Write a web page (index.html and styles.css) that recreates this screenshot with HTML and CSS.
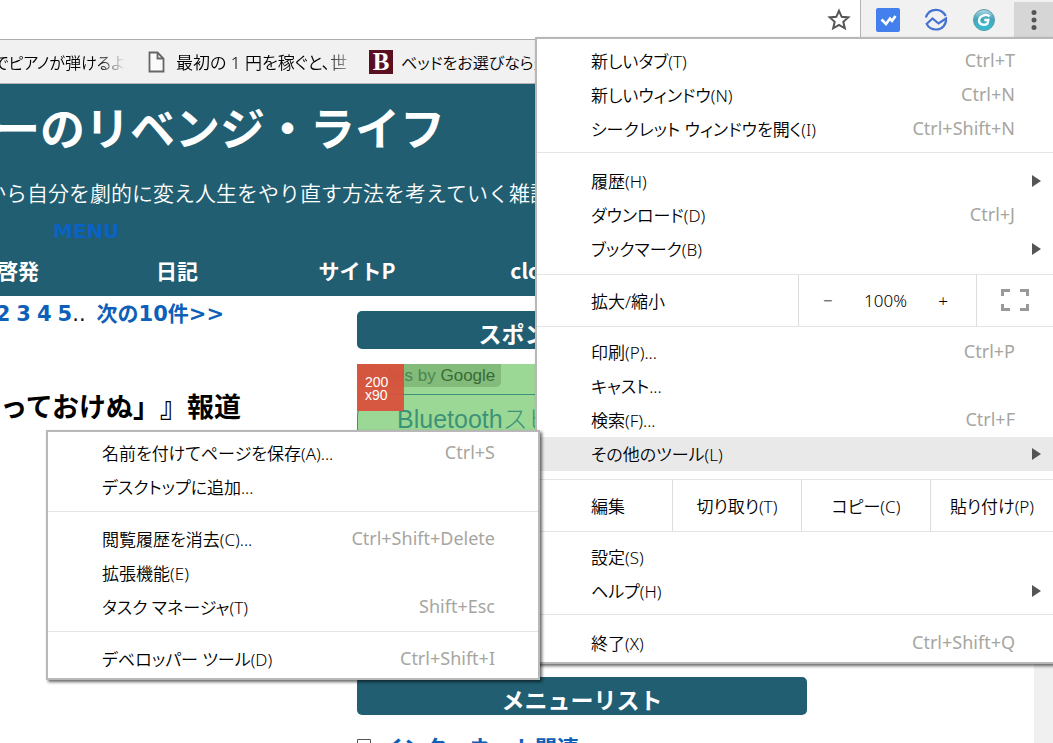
FILE: index.html
```
<!DOCTYPE html>
<html lang="ja">
<head>
<meta charset="utf-8">
<title>リベンジ・ライフ</title>
<link rel="stylesheet" href="styles.css">
</head>
<body>
<div class="browser">
  <header class="toolbar">
    <div class="omnibox">
      <button class="icon-button star" aria-label="ブックマークに追加">
        <svg width="24" height="24" viewBox="0 0 24 24"><path d="M12 2.800l2.700 6 6.600.6-5 4.400 1.500 6.500-5.800-3.400-5.800 3.400 1.500-6.500-5-4.400 6.600-.6z" fill="none" stroke="#555" stroke-width="2"/></svg>
      </button>
    </div>
    <div class="extensions">
      <button class="icon-button" aria-label="チェック">
        <svg width="24" height="24" viewBox="0 0 24 24"><rect width="24" height="24" rx="2" fill="#4380ee"/><path d="M5.500 11.500l4.500 4.500 4-5.500 2 2.300L19.500 8" fill="none" stroke="#fff" stroke-width="2.600"/></svg>
      </button>
      <button class="icon-button" aria-label="グラフ">
        <svg width="24" height="24" viewBox="0 0 24 24" fill="none" stroke="#4672d2" stroke-width="2.200"><path d="M1.800 9.500C3.500 4.500 7 1.800 12 1.800c4.500 0 8 2.700 9.700 6.200M2 16.500L8.500 10.500l6 5L22 10.500c.5 6.500-4 11-10 11-4 0-7.500-2-9.300-5.500"/></svg>
      </button>
      <button class="icon-button" aria-label="G">
        <svg width="24" height="24" viewBox="0 0 24 24"><defs><linearGradient id="orb" x1="0" y1="0" x2="0" y2="1"><stop offset="0" stop-color="#b5d9e2"/><stop offset=".45" stop-color="#45a5bc"/><stop offset="1" stop-color="#35c0d4"/></linearGradient></defs><circle cx="12" cy="12" r="10.500" fill="url(#orb)" stroke="#5a9caa"/><path d="M17.500 8.500C15 5.500 7.500 7 7 12.500c0 5 7 5 8.500 3l.8-3.500h-4" fill="none" stroke="#f5ffff" stroke-width="2.400"/></svg>
      </button>
      <button class="icon-button menu-button" aria-label="メニュー">
        <svg width="24" height="24" viewBox="0 0 24 24" fill="#555"><circle cx="12" cy="4.500" r="2.500"/><circle cx="12" cy="12" r="2.500"/><circle cx="12" cy="19.500" r="2.500"/></svg>
      </button>
    </div>
  </header>

  <nav class="bookmarks">
    <a class="bookmark first" href="#"><span>間でピアノが弾けるよ</span></a>
    <a class="bookmark second" href="#">
      <svg width="17" height="22" viewBox="0 0 17 22"><path d="M1.500 1.500h8l6 6v13h-14zM9.500 1.500v6h6" fill="#fafafa" stroke="#666" stroke-width="1.800"/></svg>
      <span class="fade">最初の 1 円を稼ぐと、世</span>
    </a>
    <a class="bookmark" href="#"><span class="b-logo">B</span><span>ベッドをお選びなら豊</span></a>
  </nav>

  <div class="page">
    <div class="site">
      <header class="site-header">
        <h1 class="site-title">ーのリベンジ・ライフ</h1>
        <p class="tagline">から自分を劇的に変え人生をやり直す方法を考えていく雑記</p>
        <a class="menu-link" href="#">MENU</a>
        <nav class="site-nav">
          <a href="#">自己啓発</a><a href="#">日記</a><a href="#">サイトP</a><a href="#">close</a>
        </nav>
      </header>
      <div class="columns">
        <main class="posts">
          <p class="pager"><a href="#">2</a><a href="#">3</a><a href="#">4</a><span><a href="#">5</a>..</span><a class="next" href="#">次の10件&gt;&gt;</a></p>
          <h2 class="post-title">っておけぬ」』報道</h2>
        </main>
        <aside class="sidebar">
          <h3 class="side-heading">スポンサードリンク</h3>
          <div class="ad">
            <div class="ad-top"><span class="ad-label">ⓘ Ads by <b>Google</b></span></div>
            <a class="ad-link" href="#">Bluetoothスピーカー</a>
            <span class="ad-size">200<br>x90</span>
          </div>
          <h3 class="side-heading">メニューリスト</h3>
          <div class="tree"><svg width="14" height="14" viewBox="0 0 14 14"><path d="M.5.5h13v13H.5zM4 7h6" fill="#fff" stroke="#555"/></svg><a href="#">インターネット関連</a></div>
        </aside>
      </div>
    </div>
    <div class="scrollbar"></div>
  </div>

  <div class="menu main-menu" role="menu">
    <div class="group g-new">
      <button class="item" role="menuitem"><span>新しいタブ(T)</span><kbd>Ctrl+T</kbd></button>
      <button class="item" role="menuitem"><span>新しいウィンドウ(N)</span><kbd>Ctrl+N</kbd></button>
      <button class="item" role="menuitem"><span>シークレット ウィンドウを開く(I)</span><kbd>Ctrl+Shift+N</kbd></button>
    </div>
    <div class="group g-history">
      <button class="item parent" role="menuitem"><span>履歴(H)</span></button>
      <button class="item" role="menuitem"><span>ダウンロード(D)</span><kbd>Ctrl+J</kbd></button>
      <button class="item parent" role="menuitem"><span>ブックマーク(B)</span></button>
    </div>
    <div class="strip">
      <span class="strip-label">拡大/縮小</span>
      <div class="zoom"><button aria-label="縮小">−</button><span class="percent">100%</span><button aria-label="拡大">+</button></div>
      <button class="fullscreen" aria-label="全画面表示"><svg width="28" height="22" viewBox="0 0 28 22"><path d="M1.500 7V1.500H9M19 1.500h7.500V7M26.500 15v5.500H19M9 20.500H1.500V15" fill="none" stroke="#999" stroke-width="3"/></svg></button>
    </div>
    <div class="group g-tools">
      <button class="item" role="menuitem"><span>印刷(P)...</span><kbd>Ctrl+P</kbd></button>
      <button class="item" role="menuitem"><span>キャスト...</span></button>
      <button class="item" role="menuitem"><span>検索(F)...</span><kbd>Ctrl+F</kbd></button>
      <button class="item parent active" role="menuitem"><span>その他のツール(L)</span></button>
    </div>
    <div class="strip">
      <span class="strip-label">編集</span>
      <button class="edit">切り取り(T)</button>
      <button class="edit">コピー(C)</button>
      <button class="edit">貼り付け(P)</button>
    </div>
    <div class="group g-settings">
      <button class="item" role="menuitem"><span>設定(S)</span></button>
      <button class="item parent" role="menuitem"><span>ヘルプ(H)</span></button>
    </div>
    <div class="group g-exit">
      <button class="item" role="menuitem"><span>終了(X)</span><kbd>Ctrl+Shift+Q</kbd></button>
    </div>
  </div>

  <div class="menu sub-menu" role="menu">
    <div class="group g-page">
      <button class="item" role="menuitem"><span>名前を付けてページを保存(A)...</span><kbd>Ctrl+S</kbd></button>
      <button class="item" role="menuitem"><span>デスクトップに追加...</span></button>
    </div>
    <div class="group g-manage">
      <button class="item" role="menuitem"><span>閲覧履歴を消去(C)...</span><kbd>Ctrl+Shift+Delete</kbd></button>
      <button class="item" role="menuitem"><span>拡張機能(E)</span></button>
      <button class="item" role="menuitem"><span>タスク マネージャ(T)</span><kbd>Shift+Esc</kbd></button>
    </div>
    <div class="group g-dev">
      <button class="item" role="menuitem"><span>デベロッパー ツール(D)</span><kbd>Ctrl+Shift+I</kbd></button>
    </div>
  </div>
</div>
</body>
</html>
```
FILE: styles.css
```
* { box-sizing: border-box; }
body { margin: 0; background: #fff; color: #111; font-family: "Noto Sans", "Noto Sans CJK JP", sans-serif; }
h1, h2, h3, p { margin: 0; }
a { color: #0d5fb8; text-decoration: none; }
button { border: 0; padding: 0; background: none; color: inherit; font: inherit; font-feature-settings: inherit; }

.browser { position: relative; height: 100vh; overflow: hidden; display: flex; flex-direction: column; }

/* Toolbar */
.toolbar { display: flex; height: 40px; flex: none; background: #f1f1f1; border-bottom: 1px solid #acacac; }
.omnibox { flex: 1; display: flex; justify-content: flex-end; align-items: center; padding-right: 9px; background: #fff; border-right: 1px solid #b4b4b4; }
.extensions { display: flex; align-items: center; gap: 24px; padding-left: 15px; }
.icon-button { display: flex; align-items: center; justify-content: center; }
.menu-button { width: 39px; height: 36px; background: #d6d6d6; margin-left: -6px; }

/* Bookmarks bar */
.bookmarks { display: flex; flex: none; align-items: center; height: 44px; background: #f1f1f1; border-bottom: 1px solid #b4b4b4; font-size: 16px; font-weight: 350; font-feature-settings: "palt"; white-space: nowrap; overflow: hidden; }
.bookmark { display: flex; flex: none; align-items: center; gap: 11px; color: #000; }
.first { width: 125px; margin-right: 23px; justify-content: flex-end; mask-image: linear-gradient(90deg, #000 78%, transparent); }
.second { width: 221px; font-size: 17px; }
.fade { flex: 1; overflow: hidden; mask-image: linear-gradient(90deg, #000 76%, transparent 96%); }
.b-logo { width: 24px; height: 24px; background: #5a1020; color: #fff; font: bold 25px/24px "Liberation Serif", serif; text-align: center; margin-right: -3px; }

/* Web page */
.page { flex: 1; display: flex; min-height: 0; overflow: hidden; }
.site { flex: 1; min-width: 0; font-family: "Noto Sans CJK JP", sans-serif; }
.scrollbar { width: 19px; background: #f0f0f0; }
.site-header { height: 212px; overflow: hidden; background: #215e72; color: #fff; white-space: nowrap; }
.site-title { display: flex; justify-content: flex-end; width: 445px; padding-top: 13px; font-size: 45px; line-height: 60px; }
.tagline { display: flex; justify-content: flex-end; width: 551px; margin-top: 20px; font-size: 21px; line-height: 30px; font-weight: 350; }
.menu-link { display: block; padding-left: 53px; margin-top: 10px; font: bold 20px/28px "DejaVu Sans", sans-serif; color: #0a62c4; }
.site-nav { display: grid; grid-template-columns: repeat(4, 180px); margin-left: -93px; margin-top: 10px; font-size: 21px; line-height: 30px; font-weight: 700; text-align: center; }
.site-nav a { color: #fff; }
.columns { display: flex; }
.posts { width: 357px; white-space: nowrap; }
.pager { display: flex; justify-content: flex-end; gap: 6px; width: 224px; font: 21px/36px "DejaVu Sans", "Noto Sans CJK JP", sans-serif; }
.pager a { font-weight: 700; }
.next { margin-left: 5px; }
.post-title { display: flex; justify-content: flex-end; width: 241px; margin-top: 54px; font-size: 27px; line-height: 40px; color: #000; text-spacing-trim: space-all; }
.sidebar { width: 450px; padding-top: 15px; }
.side-heading { height: 38px; padding-top: 7px; border-radius: 5px; background: #215e72; color: #fff; font-size: 23px; line-height: 30px; text-align: center; }
.ad { position: relative; height: 290px; margin: 15px 0 23px; background: #9cd895; font-family: "Liberation Sans", "Noto Sans CJK JP", sans-serif; }
.ad-top { height: 31px; border-bottom: 1px solid #3c9478; }
.ad-label { display: inline-block; width: 144px; height: 23px; padding-left: 6px; border-radius: 0 0 5px 5px; background: #83bb7b; color: #4c8650; font-size: 17px; line-height: 23px; white-space: nowrap; }
.ad-label b { font-weight: 400; color: #386b36; }
.ad-link { display: block; height: 60px; padding-left: 39px; border-left: 1px solid #3c9478; border-radius: 22px 0 0 22px; color: #3c9478; font-size: 25px; line-height: 48px; font-weight: 300; }
.ad-size { position: absolute; top: 0; left: 0; width: 47px; height: 47px; padding: 12px 8px; background: rgba(218, 80, 60, .94); color: #fff; font-size: 14px; line-height: 13px; }
.tree { display: flex; align-items: center; gap: 10px; margin-top: 16px; font-size: 22px; line-height: 30px; font-weight: 700; }

/* Menus */
.menu { position: absolute; background: #fff; border: 2px solid #b8b8b8; font-size: 17px; font-weight: 350; font-feature-settings: "palt"; color: #000; box-shadow: 2px 2px 3px rgba(0, 0, 0, .6); }
.main-menu { top: 37px; right: 0; width: 518px; border-right: 0; }
.sub-menu { top: 430px; right: 513px; width: 494px; }
.group + .group { border-top: 1px solid #e4e4e4; }
.g-new { padding: 5px 0 6px; }
.g-history { padding: 11px 0 8px; }
.g-tools { padding: 8px 0; }
.g-settings { padding: 8px 0 6px; }
.g-exit { padding: 11px 0 2px; }
.g-page { padding: 4px 0 7px; }
.g-manage { padding: 10px 0 7px; }
.g-dev { padding: 10px 0 2px; }
.item { display: flex; align-items: center; justify-content: space-between; width: 100%; height: 34px; padding: 0 38px 0 54px; text-align: left; white-space: nowrap; }
.item span, .item kbd { padding-bottom: 2px; }
.sub-menu .item { padding-right: 43px; }
.item kbd { font-family: "Noto Sans", sans-serif; font-size: 18px; font-weight: 400; color: #a6a6a0; }
.item.parent { padding-right: 12px; }
.parent::after { content: ""; border-left: 9px solid #555; border-top: 6px solid transparent; border-bottom: 6px solid transparent; }
.active { background: #e9e9e9; }
.strip { display: flex; height: 53px; border: solid #e4e4e4; border-width: 1px 0; }
.strip-label { flex: 1; align-self: center; padding-left: 54px; }
.zoom { display: flex; align-items: center; justify-content: space-between; width: 178px; padding: 0 28px 0 24px; border-left: 1px solid #ddd; }
.fullscreen { width: 77px; padding-top: 3px; border-left: 1px solid #ddd; }
.edit { width: 129px; border-left: 1px solid #ddd; }
.edit:last-child { width: 123px; }
```
